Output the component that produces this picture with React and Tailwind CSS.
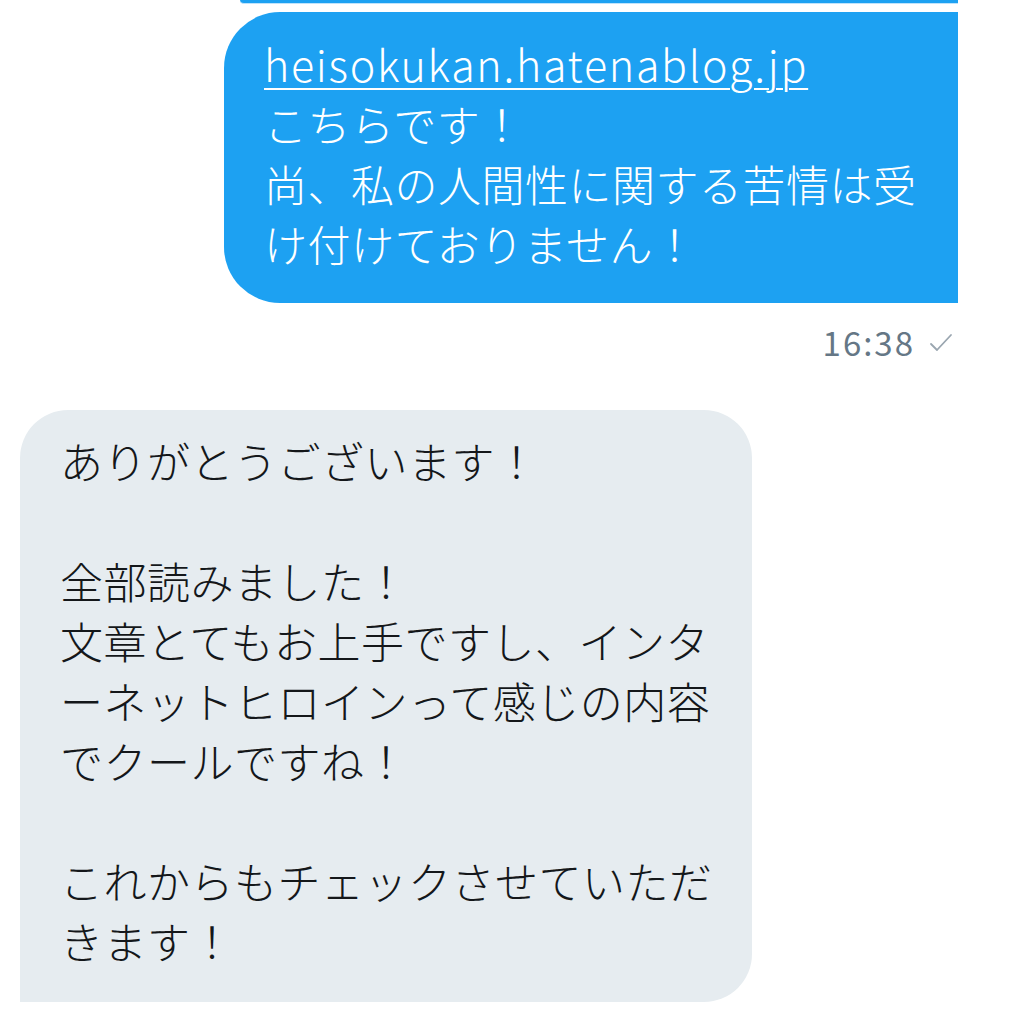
import React from 'react';

const font = { fontFamily: '"Noto Sans CJK JP", "Noto Sans", sans-serif' };

const App = () => {
    return (
        <div className="w-[1009px] h-[1024px] overflow-hidden bg-white flex flex-col font-light" style={font}>
            {/* previous bubble, cut off at the top */}
            <div className="ml-[240px] w-[718px] h-[4px] bg-[#1da1f2] rounded-bl-[20px] border-b border-[#bfe3fb]"></div>

            {/* sent bubble */}
            <div className="ml-[224px] mt-[8px] w-[734px] bg-[#1da1f2] text-white rounded-l-[56px] pl-[40px] pr-[20px] pt-[21px] pb-[30px] text-[43px] leading-[60px] tracking-[0.5px]">
                <div className="underline decoration-[2px] underline-offset-[6px] tracking-[1.7px]">heisokukan.hatenablog.jp</div>
                <div>こちらです！</div>
                <div>尚、私の人間性に関する苦情は受</div>
                <div>け付けておりません！</div>
            </div>

            {/* timestamp */}
            <div className="flex items-center justify-end gap-[14px] mr-[56px] mt-[22px] h-[36px] text-[#657786] text-[33px] font-normal tracking-[2px]">
                <span>16:38</span>
                <svg className="w-[24px] h-[20px]" viewBox="0 0 24 20" fill="none" stroke="#9aa6b0" strokeWidth="1.8" strokeLinecap="round" strokeLinejoin="round">
                    <path d="M2 11l6 6L22 2" />
                </svg>
            </div>

            {/* received bubble */}
            <div className="ml-[20px] mt-[49px] w-[732px] bg-[#e6ecf0] text-[#14171a] rounded-t-[48px] rounded-br-[48px] pl-[40px] pr-[20px] pt-[20px] pb-[32px] text-[43px] leading-[60px] tracking-[0.5px]">
                <div>ありがとうございます！</div>
                <div>&nbsp;</div>
                <div>全部読みました！</div>
                <div>文章とてもお上手ですし、インタ</div>
                <div>ーネットヒロインって感じの内容</div>
                <div>でクールですね！</div>
                <div>&nbsp;</div>
                <div>これからもチェックさせていただ</div>
                <div>きます！</div>
            </div>
        </div>
    );
};

export default App;
